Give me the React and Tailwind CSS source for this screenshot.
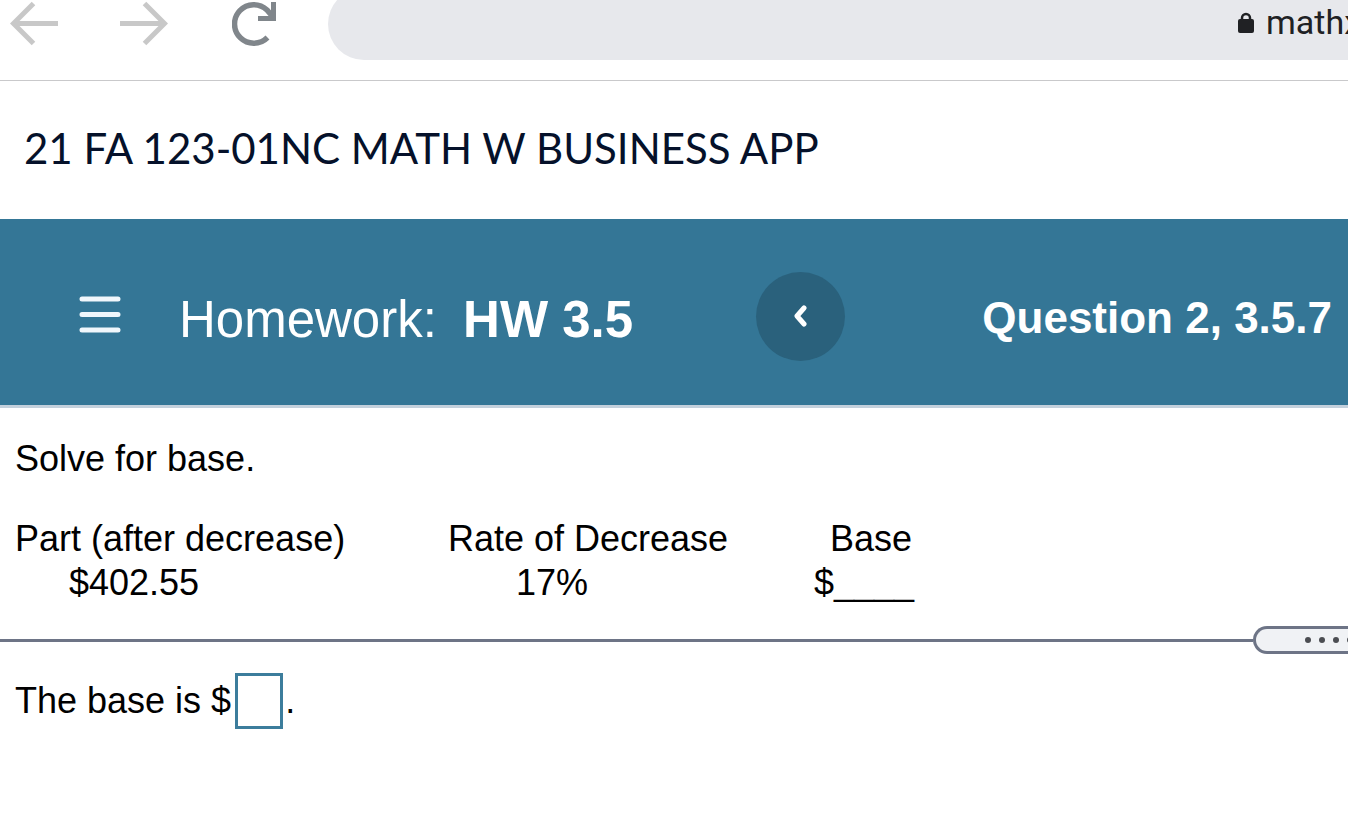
import { useState } from 'react'

function BrowserBar() {
  return (
    <header className="flex h-[81px] items-start overflow-hidden border-b border-[#c9c9cb] bg-white">
      <button type="button" aria-label="Back" className="ml-2.5">
        <svg width="48" height="48" viewBox="0 0 48 48" fill="none" stroke="#c8c8c8" strokeWidth="5">
          <path d="M48 23.5H4M23.5 3.5L3.5 23.5L23.5 43.5" />
        </svg>
      </button>
      <button type="button" aria-label="Forward" className="ml-[62px]">
        <svg width="48" height="48" viewBox="0 0 48 48" fill="none" stroke="#c8c8c8" strokeWidth="5">
          <path d="M0 23.5H44M24.5 3.5L44.5 23.5L24.5 43.5" />
        </svg>
      </button>
      <button type="button" aria-label="Reload" className="ml-16">
        <svg width="44" height="48" viewBox="0 0 44 48" fill="none" stroke="#80868b" strokeWidth="5.5">
          <path d="M35.5 37.5A19.25 19.25 0 1 1 35 10L41 17" />
          <path d="M41.5 2V18.5H26" strokeWidth="5" />
        </svg>
      </button>
      <div className="-mt-3 ml-[52px] flex h-[72px] min-w-0 flex-1 items-center justify-end overflow-hidden rounded-l-full bg-[#e7e8ec] text-[#202124]">
        <svg width="16" height="22" viewBox="0 0 16 22" className="mb-0.5 mr-3 shrink-0">
          <rect y="7" width="16" height="14" rx="2" fill="#202124" />
          <path d="M4 8V6a4 4 0 0 1 8 0V8" fill="none" stroke="#202124" strokeWidth="2.5" />
        </svg>
        <span className="mb-1 w-[82px] overflow-hidden whitespace-nowrap font-['Roboto',sans-serif] text-[34px] leading-10">
          mathx
        </span>
      </div>
    </header>
  )
}

function HomeworkBanner() {
  return (
    <div className="flex h-[189px] items-center whitespace-nowrap border-b-3 border-[#c3d0dc] bg-[#347696] pr-4 pl-[79px] pt-4 text-white">
      <button type="button" aria-label="Menu" className="mb-3">
        <svg width="42" height="38" viewBox="0 0 42 38" stroke="#f1f7fc" strokeWidth="5" strokeLinecap="round">
          <path d="M3 4H39M3 19.5H39M3 35H39" />
        </svg>
      </button>
      <h2 className="ml-[58px] text-[51px] leading-[60px]">
        Homework: <strong className="ml-3">HW 3.5</strong>
      </h2>
      <button
        type="button"
        aria-label="Previous question"
        className="mb-2 ml-[123px] flex size-[89px] shrink-0 items-center justify-center rounded-full bg-[#2a617c]"
      >
        <svg width="14" height="22" viewBox="0 0 14 22" fill="none" stroke="white" strokeWidth="5" strokeLinecap="round" strokeLinejoin="round">
          <path d="M10 3L3 11L10 19" />
        </svg>
      </button>
      <p className="mb-1 ml-auto text-[44px] leading-[60px] font-bold">Question 2, 3.5.7</p>
    </div>
  )
}

function ProblemTable() {
  return (
    <table className="mt-9 text-left leading-[44px]">
      <thead>
        <tr>
          <th className="w-[433px] p-0 font-normal">Part (after decrease)</th>
          <th className="w-[366px] p-0 font-normal">Rate of Decrease</th>
          <th className="p-0 pl-4 font-normal">Base</th>
        </tr>
      </thead>
      <tbody>
        <tr>
          <td className="p-0 pl-[54px]">$402.55</td>
          <td className="p-0 pl-[68px]">17%</td>
          <td className="p-0">$____</td>
        </tr>
      </tbody>
    </table>
  )
}

export default function App() {
  const [answer, setAnswer] = useState('')

  return (
    <div className="min-h-screen overflow-hidden bg-white font-['Liberation_Sans',Arial,sans-serif] text-black">
      <BrowserBar />
      <h1 className="flex h-[138px] items-center pb-1 pl-6 font-['Lato',sans-serif] text-[42px] text-[#05112a]">
        21 FA 123-01NC MATH W BUSINESS APP
      </h1>
      <HomeworkBanner />

      <main className="text-4xl">
        <section className="px-[15px] pt-7">
          <p className="leading-[45px]">Solve for base.</p>
          <ProblemTable />
        </section>

        {/* Divider with the drag handle */}
        <div className="mt-[21px] flex items-center">
          <div className="h-[3px] flex-1 bg-[#6d7486]" />
          <button
            type="button"
            aria-label="Resize panels"
            className="flex h-7 w-[95px] items-center gap-2 overflow-hidden rounded-l-full border-3 border-r-0 border-[#6d7486] bg-[#f0f2f5] pl-[49px]"
          >
            <span className="size-1.5 shrink-0 rounded-full bg-[#4b4d52]" />
            <span className="size-1.5 shrink-0 rounded-full bg-[#4b4d52]" />
            <span className="size-1.5 shrink-0 rounded-full bg-[#4b4d52]" />
            <span className="size-1.5 shrink-0 rounded-full bg-[#4b4d52]" />
          </button>
        </div>

        <section className="flex items-center px-[15px] pt-[19px]">
          <label htmlFor="answer">The base is $</label>
          <input
            id="answer"
            type="text"
            value={answer}
            onChange={(e) => setAnswer(e.target.value)}
            className="ml-1 h-14 w-12 border-3 border-[#3c7d9c] bg-white px-1 outline-none"
          />
          <span className="ml-0.5">.</span>
        </section>
      </main>
    </div>
  )
}
